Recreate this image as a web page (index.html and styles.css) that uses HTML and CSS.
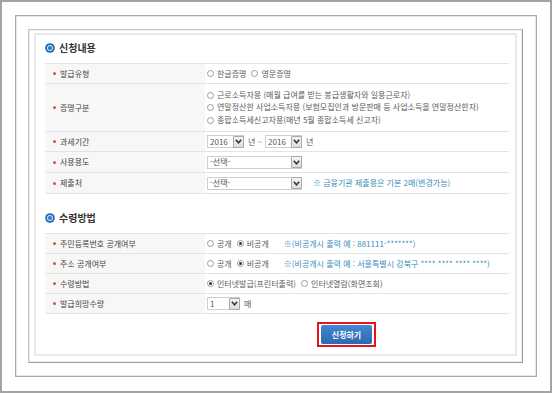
FILE: index.html
```html
<!DOCTYPE html>
<html lang="ko">
<head>
<meta charset="utf-8">
<title>신청내용</title>
<link rel="stylesheet" href="styles.css">
</head>
<body>
<div class="screen">
  <div class="frame2">
    <div class="frame3">
      <div class="panel">
        <div class="sec-title">
          <svg class="sec-icon" viewBox="0 0 10 10" width="10" height="10"><circle cx="5" cy="5" r="4.8" fill="#1f68b4"/><circle cx="5" cy="5" r="3" fill="#cfe2f4"/><circle cx="5" cy="5" r="2" fill="#2b78c6"/></svg>
          <span>신청내용</span>
        </div>
        <div class="form">
          <div class="row h19">
            <div class="label"><span class="dot"></span>발급유형</div>
            <div class="value">
              <span class="opt"><span class="radio"></span>한글증명</span>
              <span class="opt"><span class="radio"></span>영문증명</span>
            </div>
          </div>
          <div class="row h47">
            <div class="label"><span class="dot"></span>증명구분</div>
            <div class="value col">
              <span class="opt"><span class="radio"></span>근로소득자용 (매월 급여를 받는 봉급생활자와 일용근로자)</span>
              <span class="opt"><span class="radio"></span>연말정산한 사업소득자용 (보험모집인과 방문판매 등 사업소득을 연말정산한자)</span>
              <span class="opt"><span class="radio"></span>종합소득세신고자용(매년 5월 종합소득세 신고자)</span>
            </div>
          </div>
          <div class="row h19">
            <div class="label"><span class="dot"></span>과세기간</div>
            <div class="value">
              <span class="select w37"><span class="sel-text">2016</span><span class="arrow"><svg viewBox="0 0 7 5" width="7" height="5"><polyline points="0.8,0.8 3.5,3.8 6.2,0.8" fill="none" stroke="#333" stroke-width="1.5"/></svg></span></span>
              <span class="txt">년 ~</span>
              <span class="select w37"><span class="sel-text">2016</span><span class="arrow"><svg viewBox="0 0 7 5" width="7" height="5"><polyline points="0.8,0.8 3.5,3.8 6.2,0.8" fill="none" stroke="#333" stroke-width="1.5"/></svg></span></span>
              <span class="txt">년</span>
            </div>
          </div>
          <div class="row h20">
            <div class="label"><span class="dot"></span>사용용도</div>
            <div class="value">
              <span class="select w95"><span class="sel-text">-선택-</span><span class="arrow"><svg viewBox="0 0 7 5" width="7" height="5"><polyline points="0.8,0.8 3.5,3.8 6.2,0.8" fill="none" stroke="#333" stroke-width="1.5"/></svg></span></span>
            </div>
          </div>
          <div class="row h20">
            <div class="label"><span class="dot"></span>제출처</div>
            <div class="value">
              <span class="select w95"><span class="sel-text">-선택-</span><span class="arrow"><svg viewBox="0 0 7 5" width="7" height="5"><polyline points="0.8,0.8 3.5,3.8 6.2,0.8" fill="none" stroke="#333" stroke-width="1.5"/></svg></span></span>
              <span class="note ml11">※ 금융기관 제출용은 기본 2매(변경가능)</span>
            </div>
          </div>
        </div>

        <div class="sec-title second">
          <svg class="sec-icon" viewBox="0 0 10 10" width="10" height="10"><circle cx="5" cy="5" r="4.8" fill="#1f68b4"/><circle cx="5" cy="5" r="3" fill="#cfe2f4"/><circle cx="5" cy="5" r="2" fill="#2b78c6"/></svg>
          <span>수령방법</span>
        </div>
        <div class="form">
          <div class="row h19">
            <div class="label"><span class="dot"></span>주민등록번호 공개여부</div>
            <div class="value">
              <span class="opt"><span class="radio"></span>공개</span>
              <span class="opt"><span class="radio on"></span>비공개</span>
              <span class="note ml14">※(비공개시 출력 예 : 881111-*******)</span>
            </div>
          </div>
          <div class="row h19">
            <div class="label"><span class="dot"></span>주소 공개여부</div>
            <div class="value">
              <span class="opt"><span class="radio"></span>공개</span>
              <span class="opt"><span class="radio on"></span>비공개</span>
              <span class="note ml14">※(비공개시 출력 예 : 서울특별시 강북구 **** **** **** ****)</span>
            </div>
          </div>
          <div class="row h19">
            <div class="label"><span class="dot"></span>수령방법</div>
            <div class="value">
              <span class="opt"><span class="radio on"></span>인터넷발급(프린터출력)</span>
              <span class="opt"><span class="radio"></span>인터넷열람(화면조회)</span>
            </div>
          </div>
          <div class="row h19">
            <div class="label"><span class="dot"></span>발급희망수량</div>
            <div class="value">
              <span class="select w33"><span class="sel-text">1</span><span class="arrow"><svg viewBox="0 0 7 5" width="7" height="5"><polyline points="0.8,0.8 3.5,3.8 6.2,0.8" fill="none" stroke="#333" stroke-width="1.5"/></svg></span></span>
              <span class="txt">매</span>
            </div>
          </div>
        </div>

        <div class="actions">
          <span class="btn-ring"><button class="btn" type="button">신청하기</button></span>
        </div>
      </div>
    </div>
  </div>
</div>
</body>
</html>
```

FILE: styles.css
```css
* { box-sizing: border-box; }
html, body { margin: 0; padding: 0; background: #fff; }
body {
  font-family: "Noto Sans CJK KR", "Noto Sans", sans-serif;
  font-size: 8px;
  line-height: 12px;
  color: #555;
}
.screen {
  width: 552px;
  height: 393px;
  border: 2px solid #a3a3a3;
  padding: 13px;
  background: #fff;
}
.frame2 {
  width: 522px;
  height: 362px;
  border: 1px solid #ababab;
  box-shadow: inset 0 0 0 1px #e6e6e6;
  padding: 13px 13px 13px 12px;
}
.frame3 {
  width: 495px;
  height: 334px;
  border: 1px solid #c4c4c4;
  border-right-color: #9e9e9e;
  border-bottom-color: #9e9e9e;
  box-shadow: inset 0 0 0 1px #ececec;
  padding: 3px 5px 6px 5px;
}
.panel {
  width: 483px;
  height: 323px;
  border: 2px solid #e9e9e9;
  padding: 6px 6px 0 9px;
}
.sec-title {
  height: 14px;
  display: flex;
  align-items: center;
  gap: 4px;
  margin-bottom: 8px;
  font-size: 10px;
  font-weight: 700;
  color: #333;
}
.sec-title.second { margin-top: 17px; }
.sec-icon { display: block; flex: none; }
.form { border-top: 1px solid #e4e4e4; }
.row {
  display: flex;
  border-bottom: 1px solid #e4e4e4;
}
.h19 { height: 20px; }
.h20 { height: 21px; }
.h47 { height: 48px; }
.label {
  width: 160px;
  flex: none;
  background: #f7f7f7;
  display: flex;
  align-items: center;
  padding-left: 8px;
  color: #444;
}
.dot {
  width: 3px;
  height: 3px;
  border-radius: 50%;
  background: #d0504f;
  margin-right: 4px;
  flex: none;
}
.value {
  flex: 1;
  display: flex;
  align-items: center;
  padding-left: 2px;
  color: #5a5a5a;
  white-space: nowrap;
}
.value.col {
  flex-direction: column;
  align-items: flex-start;
  justify-content: center;
  line-height: 12.5px;
}
.opt {
  display: inline-flex;
  align-items: center;
  margin-right: 5px;
}
.radio {
  width: 7px;
  height: 7px;
  border: 1px solid #9c9c9c;
  border-radius: 50%;
  background: #fff;
  margin-right: 3px;
  position: relative;
  flex: none;
}
.radio.on::after {
  content: "";
  position: absolute;
  left: 1px;
  top: 1px;
  width: 3px;
  height: 3px;
  border-radius: 50%;
  background: #333;
}
.select {
  display: inline-flex;
  align-items: center;
  justify-content: space-between;
  height: 13px;
  border: 1px solid #cfcfcf;
  background: #fff;
  padding-left: 2px;
  flex: none;
}
.w37 { width: 37px; }
.w33 { width: 33px; }
.w95 { width: 95px; }
.sel-text { color: #555; }
.arrow {
  width: 11px;
  height: 12px;
  border: 1px solid #a9a9a9;
  border-radius: 1px;
  background: linear-gradient(#f4f4f4, #dedede);
  display: flex;
  align-items: center;
  justify-content: center;
  margin-right: -1px;
}
.arrow svg { display: block; }
.txt { margin: 0 3px 0 4px; }
.note { color: #3b8dbd; }
.ml11 { margin-left: 11px; }
.ml14 { margin-left: 10px; }
.actions {
  padding-top: 8px;
  padding-left: 272px;
}
.btn-ring {
  display: inline-block;
  border: 2px solid #e2141c;
  padding: 1px 2px;
  background: #fff;
}
.btn {
  display: block;
  width: 51px;
  height: 19px;
  margin: 0;
  padding: 0;
  border: 0;
  border-radius: 2px;
  background: linear-gradient(#4586cf, #2c69b2);
  color: #fff;
  font-family: "Noto Sans CJK KR", "Noto Sans", sans-serif;
  font-size: 8px;
  font-weight: 700;
  line-height: 19px;
}
```
